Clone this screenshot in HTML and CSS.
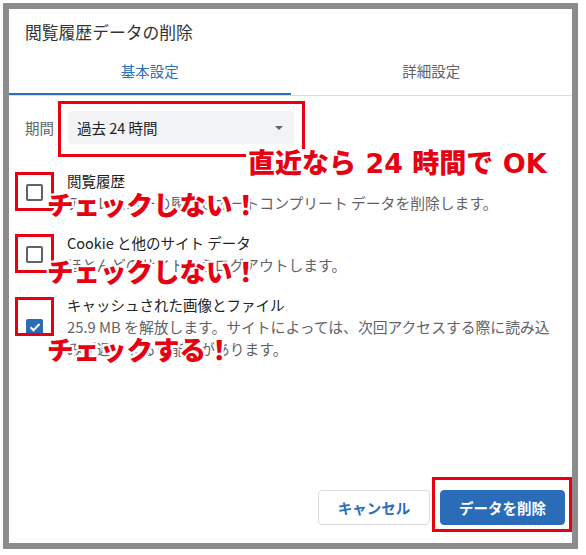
FILE: index.html
```html
<!DOCTYPE html>
<html lang="ja">
<head>
<meta charset="utf-8">
<link rel="stylesheet" href="styles.css">
</head>
<body>
<div class="frame">
  <div class="dialog">
    <h1 class="title">閲覧履歴データの削除</h1>
    <div class="tabs">
      <div class="tab active">基本設定</div>
      <div class="tab">詳細設定</div>
    </div>
    <div class="period">
      <span class="label">期間</span>
      <div class="select"><span>過去 24 時間</span><span class="arrow"></span></div>
    </div>
    <div class="options">
      <div class="option">
        <span class="checkbox"></span>
        <div class="texts">
          <div class="opt-title">閲覧履歴</div>
          <div class="opt-desc">アドレスバーの履歴とオートコンプリート データを削除します。</div>
        </div>
      </div>
      <div class="option">
        <span class="checkbox"></span>
        <div class="texts">
          <div class="opt-title">Cookie と他のサイト データ</div>
          <div class="opt-desc">ほとんどのサイトからログアウトします。</div>
        </div>
      </div>
      <div class="option">
        <span class="checkbox checked"><svg viewBox="0 0 16 16" width="16" height="16"><path d="M3.5 8.2l3 3 6-6.2" fill="none" stroke="#fff" stroke-width="2"/></svg></span>
        <div class="texts">
          <div class="opt-title">キャッシュされた画像とファイル</div>
          <div class="opt-desc">25.9 MB を解放します。サイトによっては、次回アクセスする際に読み込<br>みが遅くなる可能性があります。</div>
        </div>
      </div>
    </div>
    <div class="footer">
      <button class="btn cancel">キャンセル</button>
      <button class="btn primary">データを削除</button>
    </div>

    <div class="mark mark-select"></div>
    <div class="note note-period">直近なら 24 時間で OK</div>
    <div class="mark mark-row1"></div>
    <div class="note note-row1">チェックしない！</div>
    <div class="mark mark-row2"></div>
    <div class="note note-row2">チェックしない！</div>
    <div class="mark mark-row3"></div>
    <div class="note note-row3">チェックする！</div>
    <div class="mark mark-delete"></div>
  </div>
</div>
</body>
</html>
```
FILE: styles.css
```css
html, body {
  margin: 0;
  padding: 0;
  background: #fff;
}
body {
  font-family: "Noto Sans CJK JP", sans-serif;
  color: #202124;
}
.frame {
  margin: 3px;
  width: 575px;
  height: 546px;
  box-sizing: border-box;
  border: 6px solid #8c8c8c;
  background: #fff;
}
.dialog {
  position: relative;
  height: 100%;
  display: flex;
  flex-direction: column;
}
.title {
  margin: 0;
  padding: 11px 16px 0;
  font-size: 16.8px;
  font-weight: normal;
  line-height: 24px;
  color: #333;
}
.tabs {
  margin-top: 4px;
  display: flex;
  border-bottom: 1px solid #dadce0;
}
.tab {
  flex: 1;
  text-align: center;
  height: 45px;
  line-height: 45px;
  font-size: 14.5px;
  color: #5f6368;
  border-bottom: 2px solid transparent;
}
.tab.active {
  color: #2b6fbd;
  border-bottom-color: #2b6fbd;
}
.period {
  margin-top: 15px;
  display: flex;
  align-items: center;
  gap: 13px;
  padding-left: 16px;
}
.label {
  width: 30px;
  font-size: 14.5px;
  color: #5f6368;
}
.select {
  width: 226px;
  height: 33px;
  box-sizing: border-box;
  background: #f1f3f4;
  border-radius: 4px;
  padding: 0 11px 0 9px;
  display: flex;
  align-items: center;
  justify-content: space-between;
  font-size: 14.5px;
  color: #202124;
}
.arrow {
  width: 0;
  height: 0;
  border-left: 4.5px solid transparent;
  border-right: 4.5px solid transparent;
  border-top: 4.5px solid #5f6368;
}
.options {
  margin-top: 26px;
  display: flex;
  flex-direction: column;
  gap: 18px;
}
.option {
  display: flex;
  align-items: center;
  gap: 24px;
  padding-left: 17px;
}
.checkbox {
  flex: none;
  width: 17px;
  height: 17px;
  box-sizing: border-box;
  border: 2px solid #5f6368;
  border-radius: 2px;
  display: flex;
  align-items: center;
  justify-content: center;
}
.checkbox.checked {
  background: #2b6cb8;
  border-color: #2b6cb8;
}
.checkbox svg {
  flex: none;
}
.opt-title {
  font-size: 14.5px;
  line-height: 22px;
  color: #202124;
}
.opt-desc {
  font-size: 14.8px;
  line-height: 22px;
  color: #5f6368;
}
.footer {
  margin-top: auto;
  display: flex;
  justify-content: flex-end;
  gap: 10px;
  padding: 0 7px 18px 0;
}
.btn {
  height: 35px;
  border-radius: 4px;
  font-family: "Noto Sans CJK JP", sans-serif;
  font-size: 14.5px;
  font-weight: bold;
  cursor: pointer;
}
.cancel {
  width: 112px;
  background: #fff;
  border: 1px solid #dadce0;
  color: #2b6fbd;
}
.primary {
  width: 125px;
  background: #2b6cb8;
  border: 1px solid #2b6cb8;
  color: #fff;
}

/* annotations */
.mark {
  position: absolute;
  box-sizing: border-box;
  border: 3px solid #e60012;
}
.mark-select { left: 49px; top: 92px; width: 247px; height: 56px; }
.mark-row1 { left: 6px; top: 163px; width: 39px; height: 39px; }
.mark-row2 { left: 6px; top: 225px; width: 39px; height: 39px; }
.mark-row3 { left: 6px; top: 288px; width: 39px; height: 39px; }
.mark-delete { left: 423px; top: 468px; width: 140px; height: 55px; }

.note {
  position: absolute;
  font-family: "DejaVu Sans", "Noto Sans CJK JP", sans-serif;
  font-weight: 900;
  font-size: 26.5px;
  line-height: 30px;
  color: #e60012;
  white-space: nowrap;
  text-shadow:
    2px 0 #fff, -2px 0 #fff, 0 2px #fff, 0 -2px #fff,
    2px 2px #fff, -2px -2px #fff, 2px -2px #fff, -2px 2px #fff;
}
.note-period {
  left: 237px;
  top: 140px;
  padding-left: 2px;
  font-size: 27px;
  background: #fff;
}
.note-row1 { left: 38px; top: 182px; }
.note-row2 { left: 38px; top: 249px; }
.note-row3 { left: 38px; top: 327px; }
```
